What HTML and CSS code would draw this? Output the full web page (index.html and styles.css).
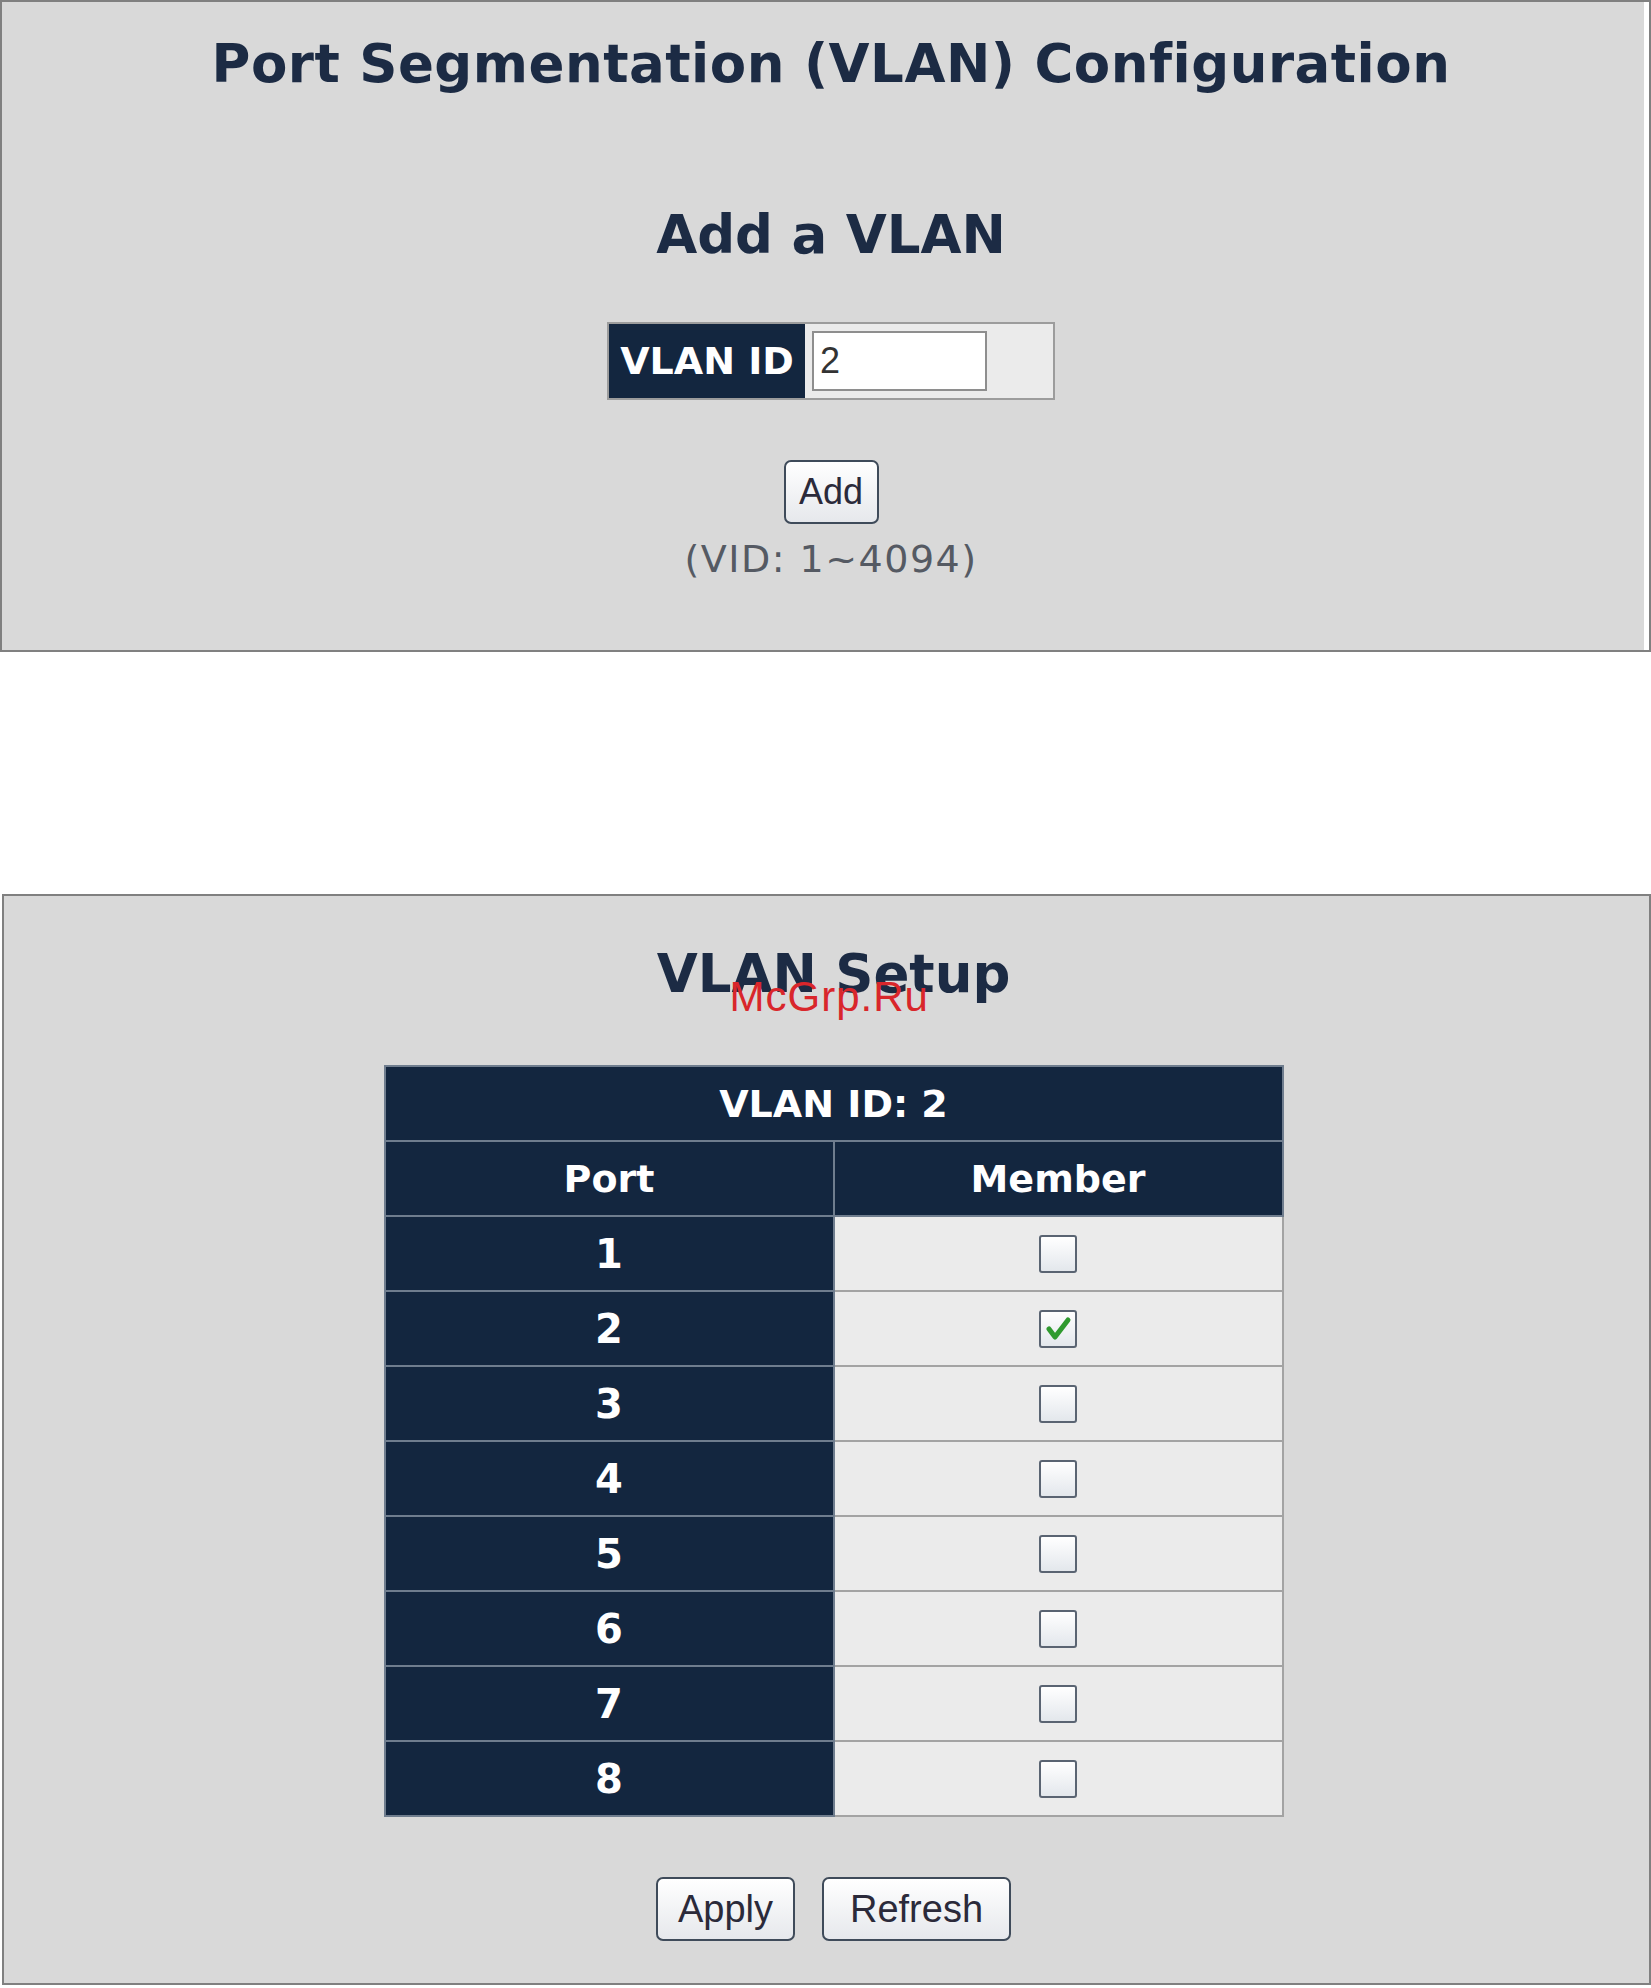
FILE: index.html
```html
<!DOCTYPE html>
<html>
<head>
  <title>Port Segmentation (VLAN) Configuration</title>
  <link rel="stylesheet" href="styles.css">
</head>
<body>

<div class="panel panel-add">
  <h1>Port Segmentation (VLAN) Configuration</h1>
  <h2>Add a VLAN</h2>
  <form id="addForm">
    <div class="vid-row">
      <label class="vid-label" for="vid">VLAN ID</label>
      <div class="vid-field"><input type="text" id="vid" name="vid" value="2"></div>
    </div>
    <div class="actions">
      <button type="submit" class="btn btn-add">Add</button>
    </div>
    <p class="hint">(VID: 1~4094)</p>
  </form>
</div>

<div class="panel panel-setup">
  <h2 class="setup-title">VLAN Setup<span class="mark">McGrp.Ru</span></h2>
  <table class="member-table">
    <tr><th colspan="2">VLAN ID: 2</th></tr>
    <tr><th>Port</th><th>Member</th></tr>
    <tr><td class="port">1</td><td class="member"><span class="box"></span></td></tr>
    <tr><td class="port">2</td><td class="member"><span class="box checked"><svg viewBox="0 0 34 34" width="34" height="34"><path d="M8 17 L14 25 L27 8" fill="none" stroke="#2f9a2f" stroke-width="5" stroke-linecap="round" stroke-linejoin="round"/></svg></span></td></tr>
    <tr><td class="port">3</td><td class="member"><span class="box"></span></td></tr>
    <tr><td class="port">4</td><td class="member"><span class="box"></span></td></tr>
    <tr><td class="port">5</td><td class="member"><span class="box"></span></td></tr>
    <tr><td class="port">6</td><td class="member"><span class="box"></span></td></tr>
    <tr><td class="port">7</td><td class="member"><span class="box"></span></td></tr>
    <tr><td class="port">8</td><td class="member"><span class="box"></span></td></tr>
  </table>
  <div class="actions actions-setup">
    <button type="button" class="btn btn-apply">Apply</button>
    <button type="button" class="btn btn-refresh">Refresh</button>
  </div>
</div>

<script>
  // toggle membership boxes
  document.querySelectorAll('.member .box').forEach(function(box) {
    box.addEventListener('click', function() {
      box.classList.toggle('checked');
    });
  });
</script>

</body>
</html>
```

FILE: styles.css
```css
body {
  margin: 0;
  background: #fff;
  font-family: "DejaVu Sans", Verdana, sans-serif;
}
.panel {
  background: #d9d9d9;
  border: 2px solid #808080;
  text-align: center;
}
.panel-add {
  padding: 32px 0 70px 11px;
  box-shadow: inset -5px 0 0 #fff;
}
.panel-setup {
  margin: 242px 0 0 2px;
  padding: 48px 0 42px 14px;
}
h1, h2 {
  margin: 0;
  color: #1c2b44;
  font-weight: bold;
  line-height: 60px;
}
h1 {
  font-size: 53px;
  letter-spacing: 0.5px;
}
h2 {
  font-size: 53px;
  margin-top: 111px;
}
.setup-title {
  margin-top: 0;
  position: relative;
}
.mark {
  position: absolute;
  top: 32px;
  left: 50%;
  margin-left: -104px;
  font-family: "Liberation Sans", Arial, sans-serif;
  font-weight: normal;
  font-size: 42px;
  line-height: 1;
  letter-spacing: 1px;
  color: #d9262b;
}

/* VLAN ID input row */
.vid-row {
  display: flex;
  width: 448px;
  height: 78px;
  margin: 57px auto 0;
  box-sizing: border-box;
  border: 2px solid #9c9c9c;
}
.vid-label {
  width: 196px;
  background: #13263f;
  color: #fff;
  font-size: 38px;
  font-weight: bold;
  line-height: 74px;
}
.vid-field {
  flex: 1;
  display: flex;
  align-items: center;
  padding-left: 7px;
  background: #ebebeb;
}
.vid-field input {
  width: 175px;
  height: 60px;
  box-sizing: border-box;
  border: 2px solid #8e8e8e;
  padding: 0 6px;
  font-family: "Liberation Sans", Arial, sans-serif;
  font-size: 36px;
  color: #333;
  background: #fff;
}

/* buttons */
.actions {
  display: flex;
  justify-content: center;
  gap: 27px;
  margin-top: 60px;
}
.btn {
  height: 64px;
  padding: 0;
  box-sizing: border-box;
  border: 2px solid #3f4b5a;
  border-radius: 7px;
  background: linear-gradient(#ffffff, #e6e8ec);
  font-family: "Liberation Sans", Arial, sans-serif;
  font-size: 38px;
  color: #2b2a3a;
}
.btn-add {
  width: 95px;
  font-size: 36px;
}
.btn-apply {
  width: 139px;
}
.btn-refresh {
  width: 189px;
}
.hint {
  margin: 14px 0 0;
  font-size: 38px;
  letter-spacing: 1.5px;
  line-height: 42px;
  color: #555a63;
}

/* member table */
.member-table {
  width: 900px;
  margin: 61px auto 0;
  border-collapse: collapse;
}
.member-table th,
.member-table td {
  height: 73px;
  padding: 0;
  border: 2px solid #6f7d8e;
  text-align: center;
  vertical-align: middle;
}
.member-table th,
.member-table .port {
  width: 50%;
  background: #13263f;
  color: #fff;
  font-size: 38px;
  font-weight: bold;
}
.member-table .port {
  font-size: 40px;
}
.member-table .member {
  background: #ebebeb;
  border-color: #a3a3a3;
}
.box {
  display: inline-block;
  width: 38px;
  height: 38px;
  box-sizing: border-box;
  border: 2px solid #5a6472;
  border-radius: 3px;
  background: linear-gradient(#ffffff, #e3e7ec);
  vertical-align: middle;
  cursor: pointer;
}
.box svg {
  display: block;
}
.actions-setup {
  margin-top: 60px;
}
```
